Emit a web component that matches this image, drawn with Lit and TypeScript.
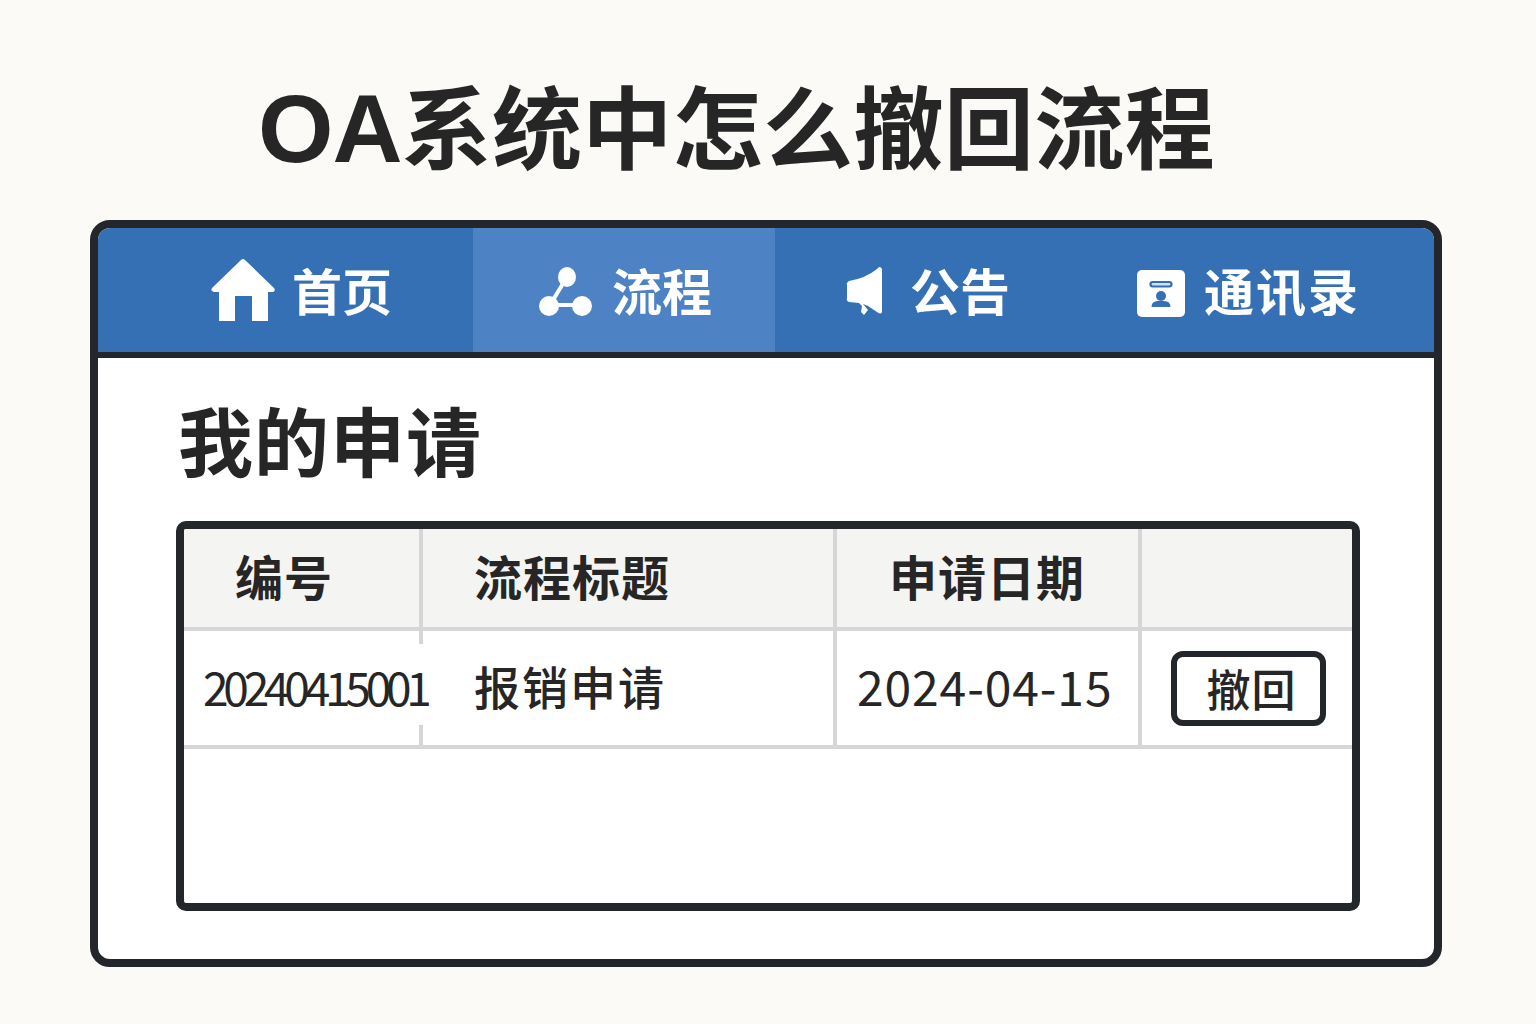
import { LitElement, html, css, svg } from "lit";
import { customElement } from "lit/decorators.js";

const homeIcon = svg`<path d="M32 0 Q33 0 34 1 L63 29 Q65 32 62 33 H57 V62 H41 V37 H24 V62 H8 V33 H3 Q-1 32 1 29 L30 1 Q31 0 32 0 Z" fill="#fff"/>`;

const flowIcon = svg`
  <path d="M29 10 L12 38 H44" fill="none" stroke="#fff" stroke-width="4"/>
  <ellipse cx="29" cy="10" rx="9" ry="10" fill="#fff"/>
  <circle cx="11" cy="39" r="10" fill="#fff"/>
  <circle cx="44" cy="39" r="10" fill="#fff"/>`;

const speakerIcon = svg`
  <path d="M31 3 Q34 -1 36 3 V46 Q35 49 31 46 L22 40 L17 38 L22 44 L18 49 L15 46 L16 40 L13 37 L3 36 Q0 35 1 32 V19 Q0 17 3 15 Q20 12 31 3 Z" fill="#fff"/>`;

const contactIcon = svg`
  <rect width="48" height="47" rx="5" fill="#fff"/>
  <rect x="13.5" y="12" width="21" height="4.5" rx="2.2" fill="#cfe0f2" stroke="#3570b5" stroke-width="2.2"/>
  <circle cx="24" cy="26" r="5" fill="#3570b5"/>
  <path d="M14.5 37 Q14.5 31 21 31 H27 Q33.5 31 33.5 37 Z" fill="#3570b5"/>`;

const tabs = [
  { label: "首页", icon: homeIcon, w: 64, h: 62, cls: "home" },
  { label: "流程", icon: flowIcon, w: 54, h: 50, cls: "flow active" },
  { label: "公告", icon: speakerIcon, w: 37, h: 50, cls: "notice" },
  { label: "通讯录", icon: contactIcon, w: 48, h: 47, cls: "contacts" },
];

@customElement("app-root")
export class AppRoot extends LitElement {
  static styles = css`
    :host {
      display: block;
      height: 1024px;
      overflow: hidden;
      background: #fbfaf7;
      color: #262626;
      font-family: "Noto Sans CJK SC", "Liberation Sans", sans-serif;
    }

    .title {
      margin: 0;
      height: 220px;
      box-sizing: border-box;
      padding: 62px 0 0 258px;
      font-size: 90px;
      line-height: 122px;
      font-weight: 700;
      letter-spacing: 0.4px;
      white-space: nowrap;
    }

    .latin {
      font-family: "Liberation Sans", sans-serif;
      font-size: 97px;
      letter-spacing: -1px;
    }

    .window {
      margin: 0 94px 0 90px;
      height: 747px;
      box-sizing: border-box;
      border: 8px solid #23272b;
      border-radius: 20px;
      background: #fff;
      overflow: hidden;
    }

    .nav {
      display: flex;
      height: 130px;
      box-sizing: border-box;
      border-bottom: 6px solid #23272b;
      background: #3570b5;
      color: #fff;
    }

    .tab {
      display: flex;
      align-items: center;
      box-sizing: border-box;
      font-size: 50px;
      line-height: 70px;
      font-weight: 700;
      white-space: nowrap;
    }

    .tab span {
      margin-bottom: 2px;
    }

    .tab svg {
      flex: none;
      display: block;
    }

    .tab.active {
      background: #4d82c4;
    }

    .home {
      width: 375px;
      padding-left: 113px;
      gap: 17px;
    }

    .flow {
      width: 302px;
      padding-left: 65px;
      gap: 20px;
    }

    .flow svg {
      margin-top: 4px;
    }

    .notice {
      width: 321px;
      padding-left: 71px;
      gap: 27px;
    }

    .notice svg {
      margin-top: 2px;
    }

    .contacts {
      flex: 1;
      padding-left: 41px;
      gap: 19px;
      letter-spacing: 2px;
    }

    .contacts svg {
      margin-top: 6px;
    }

    .content {
      padding: 37px 74px 0 78px;
    }

    .heading {
      margin: 0;
      height: 126px;
      padding-left: 2px;
      font-size: 75px;
      line-height: 88px;
      font-weight: 700;
      letter-spacing: 1px;
      white-space: nowrap;
    }

    .table {
      height: 390px;
      box-sizing: border-box;
      border: 8px solid #23272b;
      border-radius: 10px;
      background: #fff;
      overflow: hidden;
    }

    .row {
      display: grid;
      grid-template-columns: 239px 414px 305px 1fr;
      border-bottom: 4px solid #d6d6d6;
    }

    .row.head {
      height: 102px;
      box-sizing: border-box;
      background: #f4f4f2;
      font-size: 48px;
      font-weight: 700;
    }

    .row.body {
      height: 118px;
      box-sizing: border-box;
      font-size: 46px;
    }

    .cell {
      display: flex;
      align-items: center;
      box-sizing: border-box;
      padding-bottom: 6px;
      border-right: 4px solid #d6d6d6;
      white-space: nowrap;
    }

    .cell:last-child {
      border-right: none;
    }

    .cell.indent-id {
      padding-left: 51px;
      letter-spacing: 1px;
    }

    .cell.indent-title {
      padding-left: 51px;
      letter-spacing: 1px;
    }

    .body .cell.indent-title {
      font-weight: 500;
      letter-spacing: 2px;
    }

    .cell.indent-date {
      padding-left: 52px;
      letter-spacing: 1px;
    }

    .cell.id {
      padding-bottom: 0;
    }

    /* the number runs over the column rule and hides part of it */
    .number {
      position: relative;
      align-self: flex-start;
      margin: 13px 0 0 19px;
      padding: 18px 0 15px;
      background: #fff;
      font-size: 46px;
      line-height: 48px;
      letter-spacing: -5.2px;
    }

    .date {
      padding-left: 20px;
      font-size: 48px;
      letter-spacing: 0.9px;
    }

    .action {
      padding: 0 0 0 29px;
    }

    .button {
      display: flex;
      align-items: center;
      justify-content: center;
      width: 155px;
      height: 75px;
      box-sizing: border-box;
      padding-left: 12px;
      border: 6px solid #23272b;
      border-radius: 12px;
      background: #fff;
      color: #262626;
      font-family: inherit;
      font-size: 44px;
      font-weight: 500;
      letter-spacing: 1px;
    }
  `;

  render() {
    return html`
      <h1 class="title"><span class="latin">OA</span>系统中怎么撤回流程</h1>
      <div class="window">
        <nav class="nav">
          ${tabs.map(
            (tab) => html`
              <div class="tab ${tab.cls}">
                <svg
                  width=${tab.w}
                  height=${tab.h}
                  viewBox="0 0 ${tab.w} ${tab.h}"
                  aria-hidden="true"
                >
                  ${tab.icon}
                </svg>
                <span>${tab.label}</span>
              </div>
            `
          )}
        </nav>
        <div class="content">
          <h2 class="heading">我的申请</h2>
          <div class="table">
            <div class="row head">
              <div class="cell indent-id">编号</div>
              <div class="cell indent-title">流程标题</div>
              <div class="cell indent-date">申请日期</div>
              <div class="cell"></div>
            </div>
            <div class="row body">
              <div class="cell id"><span class="number">20240415001</span></div>
              <div class="cell indent-title">报销申请</div>
              <div class="cell date">2024-04-15</div>
              <div class="cell action">
                <button class="button">撤回</button>
              </div>
            </div>
          </div>
        </div>
      </div>
    `;
  }
}
